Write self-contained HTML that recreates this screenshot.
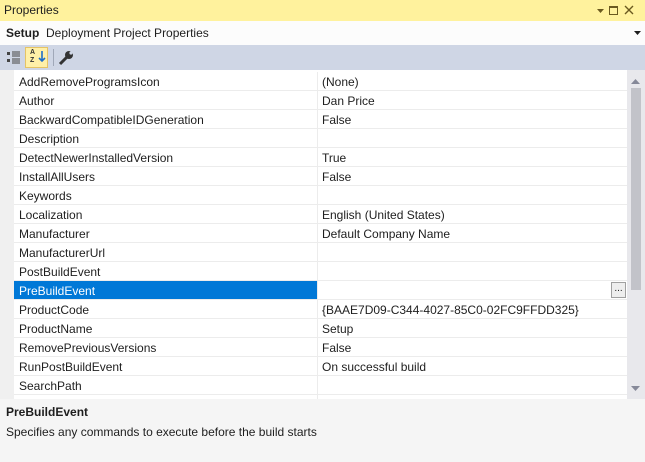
<!DOCTYPE html>
<html><head><style>
*{margin:0;padding:0;box-sizing:border-box}
body{width:645px;height:462px;overflow:hidden;background:#f5f5f5;font-family:"Liberation Sans",sans-serif;font-size:12px;color:#1e1e1e;position:relative}
.title{position:absolute;left:0;top:0;width:645px;height:21px;background:#fff29d;padding:3px 0 0 4px}
.setup{position:absolute;left:0;top:21px;width:645px;height:24px;background:#fcfcfc;padding:5px 0 0 6px}
.tb{position:absolute;left:0;top:45px;width:645px;height:25px;background:#cfd6e5}
.grid{position:absolute;left:0;top:70px;width:627px;height:329px;background:#fff;overflow:hidden}
.gut{position:absolute;left:0;top:0;width:14px;height:329px;background:#f0f0f0}
.row{position:absolute;left:14px;width:613px;height:19px;border-bottom:1px solid #ececec}
.row span{position:absolute;top:3px;left:5px}
.row b{position:absolute;top:3px;left:308px;font-weight:normal}
.row i{position:absolute;left:303px;top:0;width:1px;height:19px;background:#ececec}
.sel{background:#0078d7;color:#fff}
.sb{position:absolute;left:627px;top:70px;width:18px;height:329px;background:#e8e8ec}
.desc{position:absolute;left:6px;top:405px}
</style></head><body>
<div class="title">Properties</div>
<svg style="position:absolute;left:595px;top:5px" width="46" height="12"><path d="M2 4h7l-3.5 4z" fill="#6a5a1f"/><rect x="14.5" y="1.5" width="8" height="8" fill="none" stroke="#6a5a1f"/><rect x="14" y="1" width="9" height="2" fill="#6a5a1f"/><path d="M30 1l8 8M38 1l-8 8" stroke="#6a5a1f" stroke-width="1.4"/></svg>
<div class="setup"><b>Setup</b>&nbsp; Deployment Project Properties</div>
<svg style="position:absolute;left:634px;top:31px" width="7" height="4"><path d="M0 0h7l-3.5 4z" fill="#1e1e1e"/></svg>
<div class="tb">
<svg style="position:absolute;left:6px;top:5px" width="16" height="14"><rect x="1" y="2" width="3" height="3" fill="#444"/><rect x="1" y="9" width="3" height="3" fill="#444"/><path d="M6 2h8M6 4h8M6 6h8M6 9h8M6 11h8M6 13h8" stroke="#444"/></svg>
<div style="position:absolute;left:25px;top:2px;width:23px;height:21px;background:#fff0a8;border:1px solid #e5c365"></div>
<div style="position:absolute;left:30px;top:4px;font-size:7px;font-weight:bold;line-height:8px;color:#333">A<br>Z</div>
<svg style="position:absolute;left:38px;top:6px" width="8" height="12"><path d="M4 0v10M1 7l3 3 3-3" stroke="#1e6ec8" stroke-width="1.6" fill="none"/></svg>
<div style="position:absolute;left:53px;top:4px;width:1px;height:17px;background:#a0a8b8"></div>
<svg style="position:absolute;left:58px;top:5px" width="16" height="16"><circle cx="11" cy="5" r="4" fill="#333"/><circle cx="13" cy="3" r="1.6" fill="#cfd6e5"/><path d="M9 7l-7 7" stroke="#333" stroke-width="3"/></svg>
</div>
<div class="grid"><div class="gut"></div>
<div class="row" style="top:2px"><span>AddRemoveProgramsIcon</span><i></i><b>(None)</b></div>
<div class="row" style="top:21px"><span>Author</span><i></i><b>Dan Price</b></div>
<div class="row" style="top:40px"><span>BackwardCompatibleIDGeneration</span><i></i><b>False</b></div>
<div class="row" style="top:59px"><span>Description</span><i></i><b></b></div>
<div class="row" style="top:78px"><span>DetectNewerInstalledVersion</span><i></i><b>True</b></div>
<div class="row" style="top:97px"><span>InstallAllUsers</span><i></i><b>False</b></div>
<div class="row" style="top:116px"><span>Keywords</span><i></i><b></b></div>
<div class="row" style="top:135px"><span>Localization</span><i></i><b>English (United States)</b></div>
<div class="row" style="top:154px"><span>Manufacturer</span><i></i><b>Default Company Name</b></div>
<div class="row" style="top:173px"><span>ManufacturerUrl</span><i></i><b></b></div>
<div class="row" style="top:192px"><span>PostBuildEvent</span><i></i><b></b></div>
<div class="row" style="top:211px"><div class="sel" style="position:absolute;left:0;top:0;width:303px;height:18px"></div><span style="color:#fff">PreBuildEvent</span><i></i>
<div style="position:absolute;left:597px;top:1px;width:15px;height:16px;border:1px solid #a0a0a0;background:#eee;font-size:10px;text-align:center;line-height:12px">...</div></div>
<div class="row" style="top:230px"><span>ProductCode</span><i></i><b>{BAAE7D09-C344-4027-85C0-02FC9FFDD325}</b></div>
<div class="row" style="top:249px"><span>ProductName</span><i></i><b>Setup</b></div>
<div class="row" style="top:268px"><span>RemovePreviousVersions</span><i></i><b>False</b></div>
<div class="row" style="top:287px"><span>RunPostBuildEvent</span><i></i><b>On successful build</b></div>
<div class="row" style="top:306px"><span>SearchPath</span><i></i><b></b></div>
<div class="row" style="top:325px"><i></i></div>
</div>
<div class="sb">
<svg style="position:absolute;left:4px;top:8px" width="10" height="6"><path d="M0 6h9l-4.5-5z" fill="#868999"/></svg>
<div style="position:absolute;left:4px;top:18px;width:10px;height:202px;background:#c2c3c9"></div>
<svg style="position:absolute;left:4px;top:316px" width="10" height="6"><path d="M0 0h9l-4.5 5z" fill="#868999"/></svg>
</div>
<div class="desc"><b>PreBuildEvent</b><div style="margin-top:6px">Specifies any commands to execute before the build starts</div></div>
</body></html>
